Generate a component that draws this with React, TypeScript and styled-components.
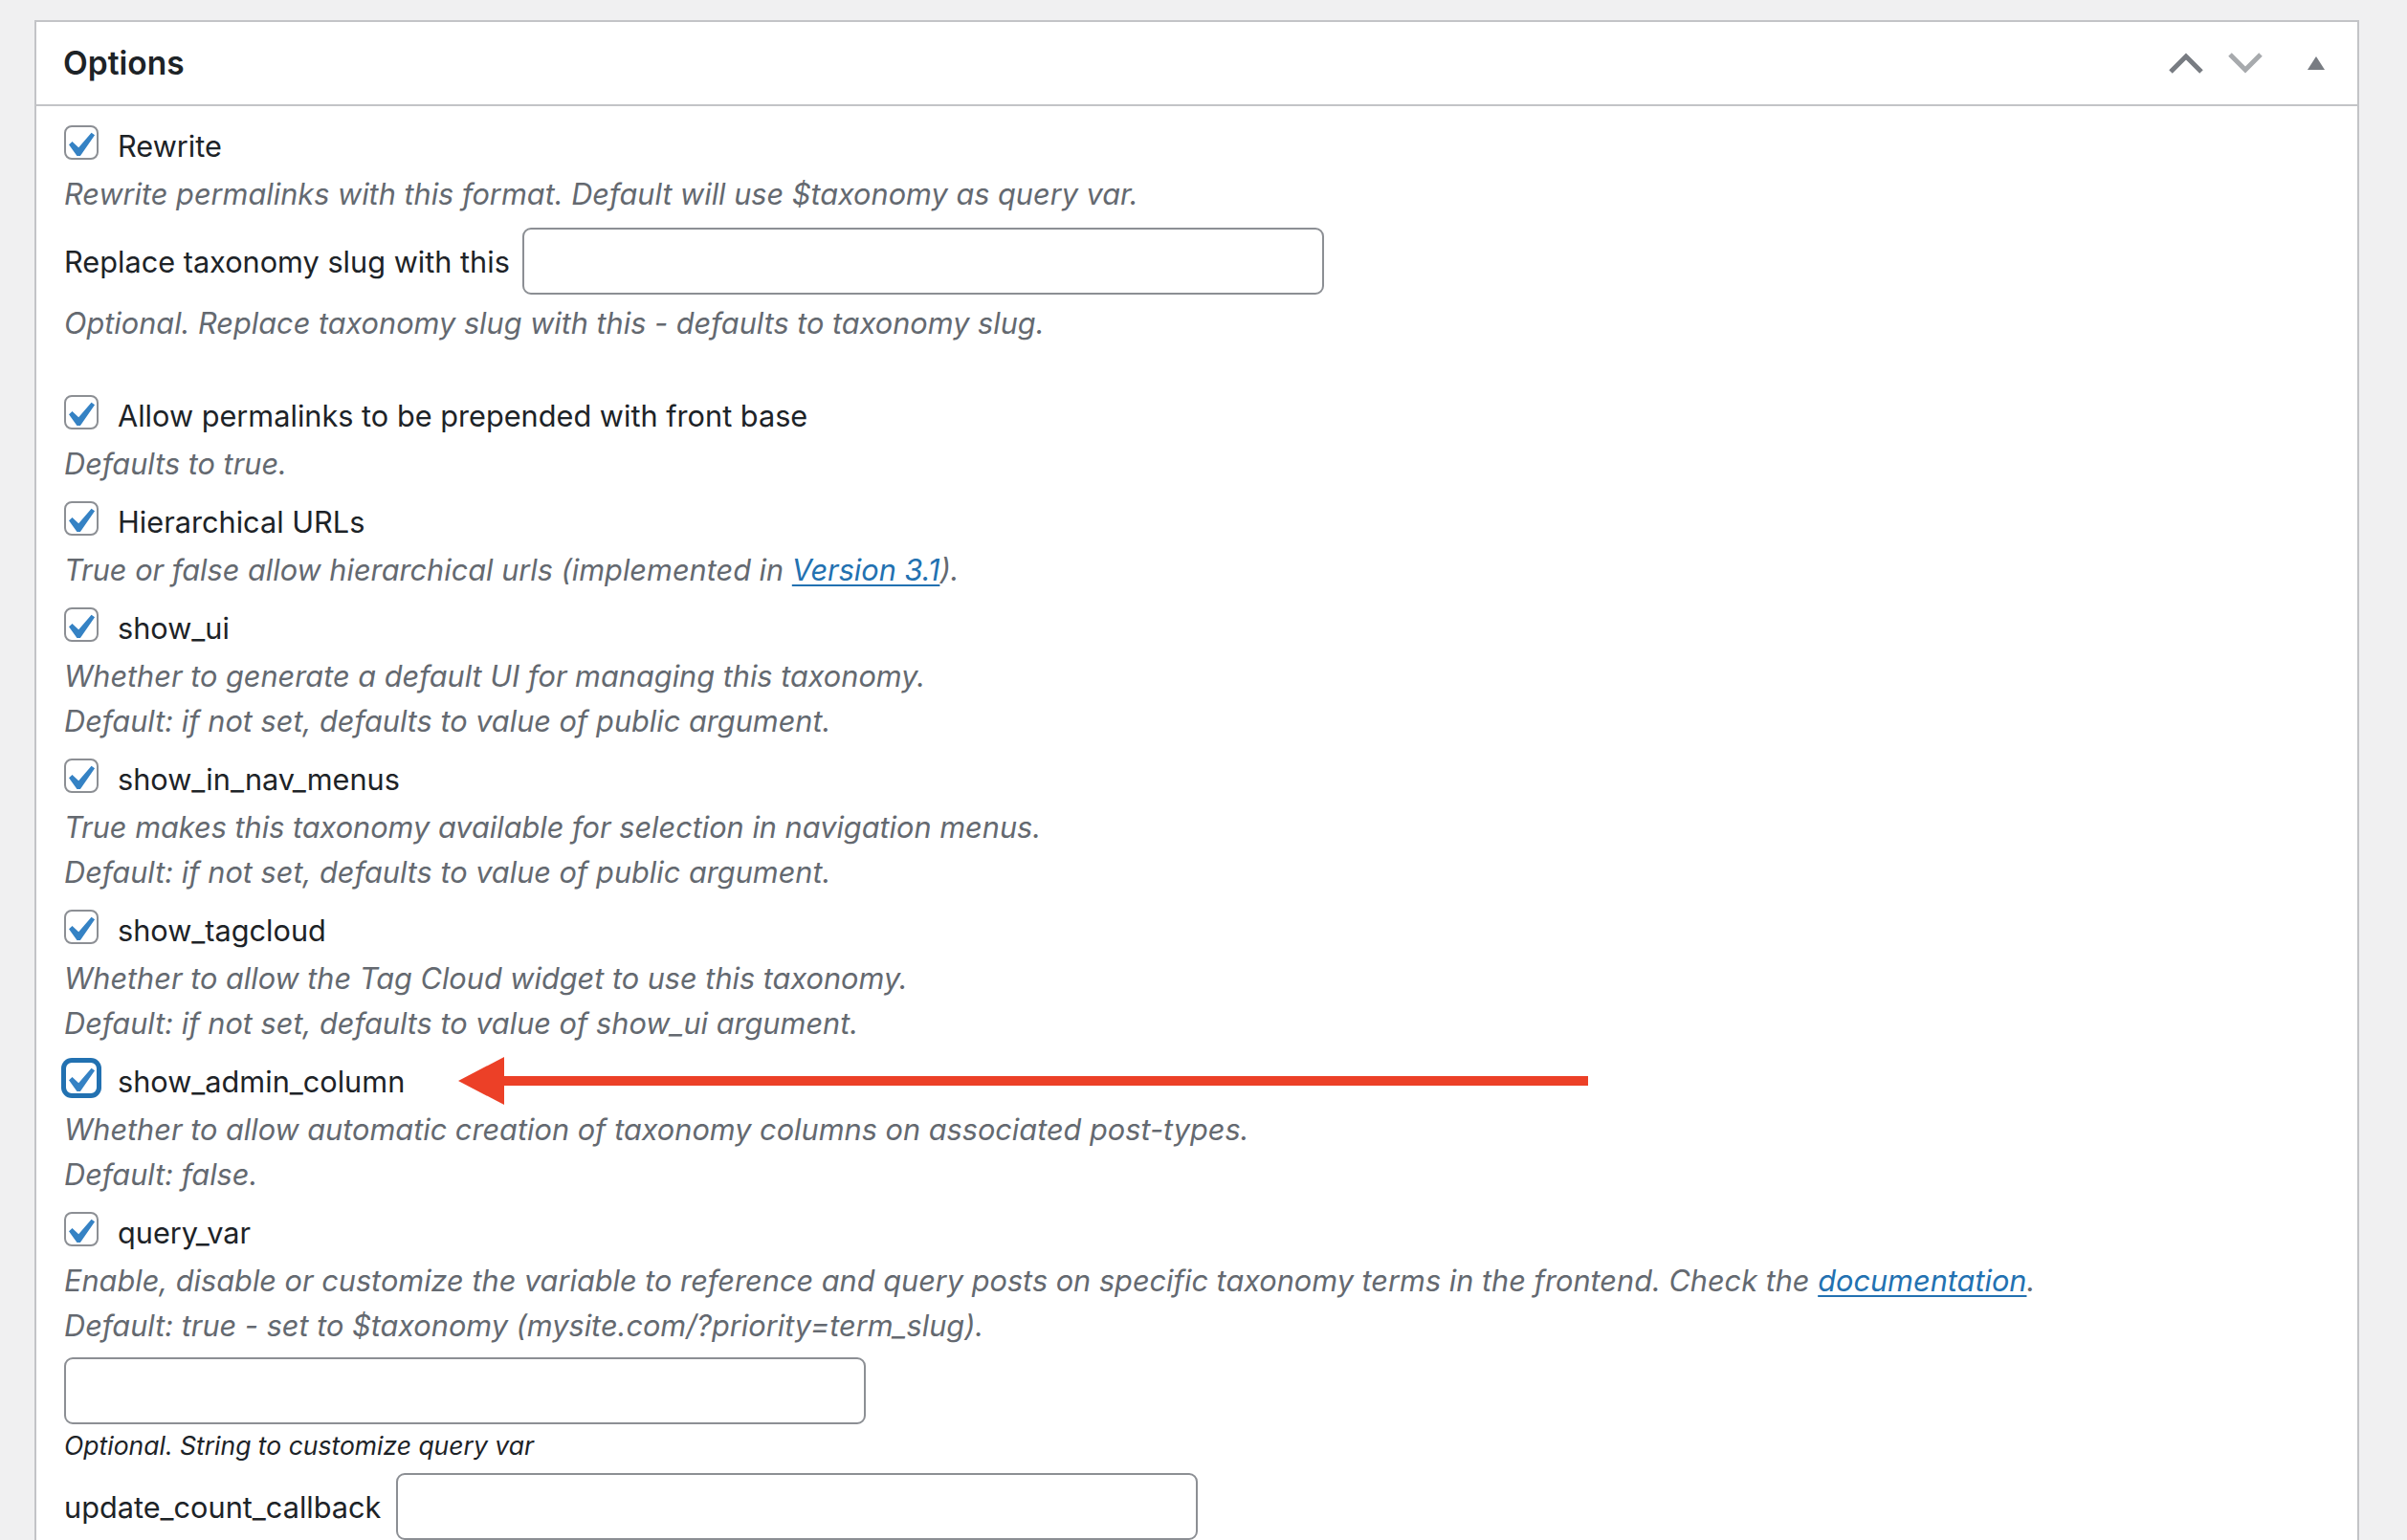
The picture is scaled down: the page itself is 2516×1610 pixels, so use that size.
import React from "react";
import styled, { createGlobalStyle } from "styled-components";

const GlobalStyle = createGlobalStyle`
  html, body {
    margin: 0;
    overflow: hidden;
    background: #f0f0f1;
  }
  body {
    font-family: "Inter", "Roboto", "Liberation Sans", sans-serif;
    color: #1d2327;
  }
`;

const Page = styled.div`
  padding: 21px 50px 0 36px;
`;

const Postbox = styled.section`
  background: #fff;
  border: 2px solid #c3c4c7;
  border-bottom: none;
`;

const PostboxHeader = styled.header`
  display: flex;
  align-items: center;
  justify-content: space-between;
  height: 86px;
  border-bottom: 2px solid #c3c4c7;
`;

const Title = styled.h2`
  margin: 0 0 0 28px;
  font-size: 33.5px;
  font-weight: 600;
  color: #1d2327;
`;

const HandleActions = styled.div`
  display: flex;
  height: 100%;
`;

const HandleButton = styled.button<{ $w: number }>`
  width: ${(p) => p.$w}px;
  height: 100%;
  padding: 0;
  border: none;
  background: none;
  display: flex;
  align-items: center;
  justify-content: center;
  cursor: pointer;
`;

const Inside = styled.div`
  padding: 20px 29px 0 29px;
`;

const OptionBlock = styled.div<{ $after?: number }>`
  margin-bottom: ${(p) => p.$after ?? 16}px;
`;

const CheckRow = styled.label`
  position: relative;
  display: flex;
  align-items: center;
  gap: 20px;
  height: 36px;
  margin-bottom: 12px;
  font-size: 30.7px;
  line-height: 36px;
`;

const LabelText = styled.span`
  padding-top: 8px;
`;

const Box = styled.span<{ $focus?: boolean }>`
  position: relative;
  flex: none;
  width: 36px;
  height: 36px;
  box-sizing: border-box;
  border: 2px solid ${(p) => (p.$focus ? "#2271b1" : "#8c8f94")};
  border-radius: 8px;
  background: #fff;
  box-shadow: ${(p) => (p.$focus ? "0 0 0 3px #2271b1" : "none")};

  svg {
    position: absolute;
    left: -12px;
    top: -7px;
  }
`;

const Desc = styled.p<{ $top?: number }>`
  margin: ${(p) => p.$top ?? 0}px 0 0 0;
  font-size: 30.7px;
  line-height: 47px;
  font-style: italic;
  color: #646970;

  a {
    color: #2271b1;
    text-decoration: underline;
    text-decoration-thickness: 2px;
    text-underline-offset: 4px;
  }
`;

const FieldRow = styled.div<{ $top: number; $gap?: number }>`
  display: flex;
  align-items: center;
  gap: ${(p) => p.$gap ?? 13}px;
  margin-top: ${(p) => p.$top}px;
  font-size: 30.7px;
`;

const TextInput = styled.input<{ $top?: number }>`
  display: block;
  width: 838px;
  height: 70px;
  margin-top: ${(p) => p.$top ?? 0}px;
  box-sizing: border-box;
  border: 2px solid #8c8f94;
  border-radius: 9px;
  background: #fff;
  font: inherit;
`;

const SmallNote = styled.p`
  margin: 4px 0 0 0;
  font-size: 26.5px;
  line-height: 36px;
  font-style: italic;
  color: #1d2327;
`;

const Arrow = styled.svg`
  position: absolute;
  left: 412px;
  top: -4px;
`;

function Check({ focus }: { focus?: boolean }) {
  return (
    <Box $focus={focus}>
      <svg width="52" height="52" viewBox="0 0 20 20">
        <path
          d="M14.83 4.89l1.34.94-5.81 8.38H9.02L5.78 9.67l1.34-1.25 2.57 2.4z"
          fill="#3582c4"
        />
      </svg>
    </Box>
  );
}

type Opt = {
  label: string;
  lines: React.ReactNode[];
  focus?: boolean;
  arrow?: boolean;
};

const options: Opt[] = [
  {
    label: "Allow permalinks to be prepended with front base",
    lines: ["Defaults to true."],
  },
  {
    label: "Hierarchical URLs",
    lines: [
      <>
        True or false allow hierarchical urls (implemented in{" "}
        <a href="#">Version 3.1</a>).
      </>,
    ],
  },
  {
    label: "show_ui",
    lines: [
      "Whether to generate a default UI for managing this taxonomy.",
      "Default: if not set, defaults to value of public argument.",
    ],
  },
  {
    label: "show_in_nav_menus",
    lines: [
      "True makes this taxonomy available for selection in navigation menus.",
      "Default: if not set, defaults to value of public argument.",
    ],
  },
  {
    label: "show_tagcloud",
    lines: [
      "Whether to allow the Tag Cloud widget to use this taxonomy.",
      "Default: if not set, defaults to value of show_ui argument.",
    ],
  },
  {
    label: "show_admin_column",
    focus: true,
    arrow: true,
    lines: [
      "Whether to allow automatic creation of taxonomy columns on associated post-types.",
      "Default: false.",
    ],
  },
];

export default function App() {
  return (
    <>
      <GlobalStyle />
      <Page>
        <Postbox>
          <PostboxHeader>
            <Title>Options</Title>
            <HandleActions>
              <HandleButton $w={62} aria-label="Move up">
                <svg width="36" height="22" viewBox="0 0 36 22">
                  <polyline points="2,20 18,4 34,20" fill="none" stroke="#787c82" strokeWidth="5" />
                </svg>
              </HandleButton>
              <HandleButton $w={62} aria-label="Move down">
                <svg width="36" height="22" viewBox="0 0 36 22">
                  <polyline points="2,2 18,18 34,2" fill="none" stroke="#a7aaad" strokeWidth="5" />
                </svg>
              </HandleButton>
              <HandleButton $w={86} aria-label="Toggle panel">
                <svg width="18" height="14" viewBox="0 0 18 14">
                  <polygon points="0,14 9,0 18,14" fill="#787c82" />
                </svg>
              </HandleButton>
            </HandleActions>
          </PostboxHeader>

          <Inside>
            <OptionBlock $after={52}>
              <CheckRow>
                <Check />
                <LabelText>Rewrite</LabelText>
              </CheckRow>
              <Desc $top={1}>Rewrite permalinks with this format. Default will use $taxonomy as query var.</Desc>
              <FieldRow $top={12}>
                Replace taxonomy slug with this
                <TextInput />
              </FieldRow>
              <Desc $top={6}>Optional. Replace taxonomy slug with this - defaults to taxonomy slug.</Desc>
            </OptionBlock>

            {options.map((o) => (
              <OptionBlock key={o.label}>
                <CheckRow>
                  <Check focus={o.focus} />
                  <LabelText>{o.label}</LabelText>
                  {o.arrow && (
                    <Arrow width="1181" height="50" viewBox="0 0 1181 50">
                      <polygon points="0,25 48,0 48,50" fill="#ec4027" />
                      <rect x="47" y="20" width="1134" height="10" fill="#ec4027" />
                    </Arrow>
                  )}
                </CheckRow>
                {o.lines.map((l, i) => (
                  <Desc key={i}>{l}</Desc>
                ))}
              </OptionBlock>
            ))}

            <OptionBlock $after={0}>
              <CheckRow>
                <Check />
                <LabelText>query_var</LabelText>
              </CheckRow>
              <Desc>
                Enable, disable or customize the variable to reference and query posts on specific
                taxonomy terms in the frontend. Check the <a href="#">documentation</a>.
              </Desc>
              <Desc>Default: true - set to $taxonomy (mysite.com/?priority=term_slug).</Desc>
              <TextInput $top={10} />
              <SmallNote>Optional. String to customize query var</SmallNote>
              <FieldRow $top={11} $gap={16}>
                update_count_callback
                <TextInput />
              </FieldRow>
            </OptionBlock>
          </Inside>
        </Postbox>
      </Page>
    </>
  );
}
